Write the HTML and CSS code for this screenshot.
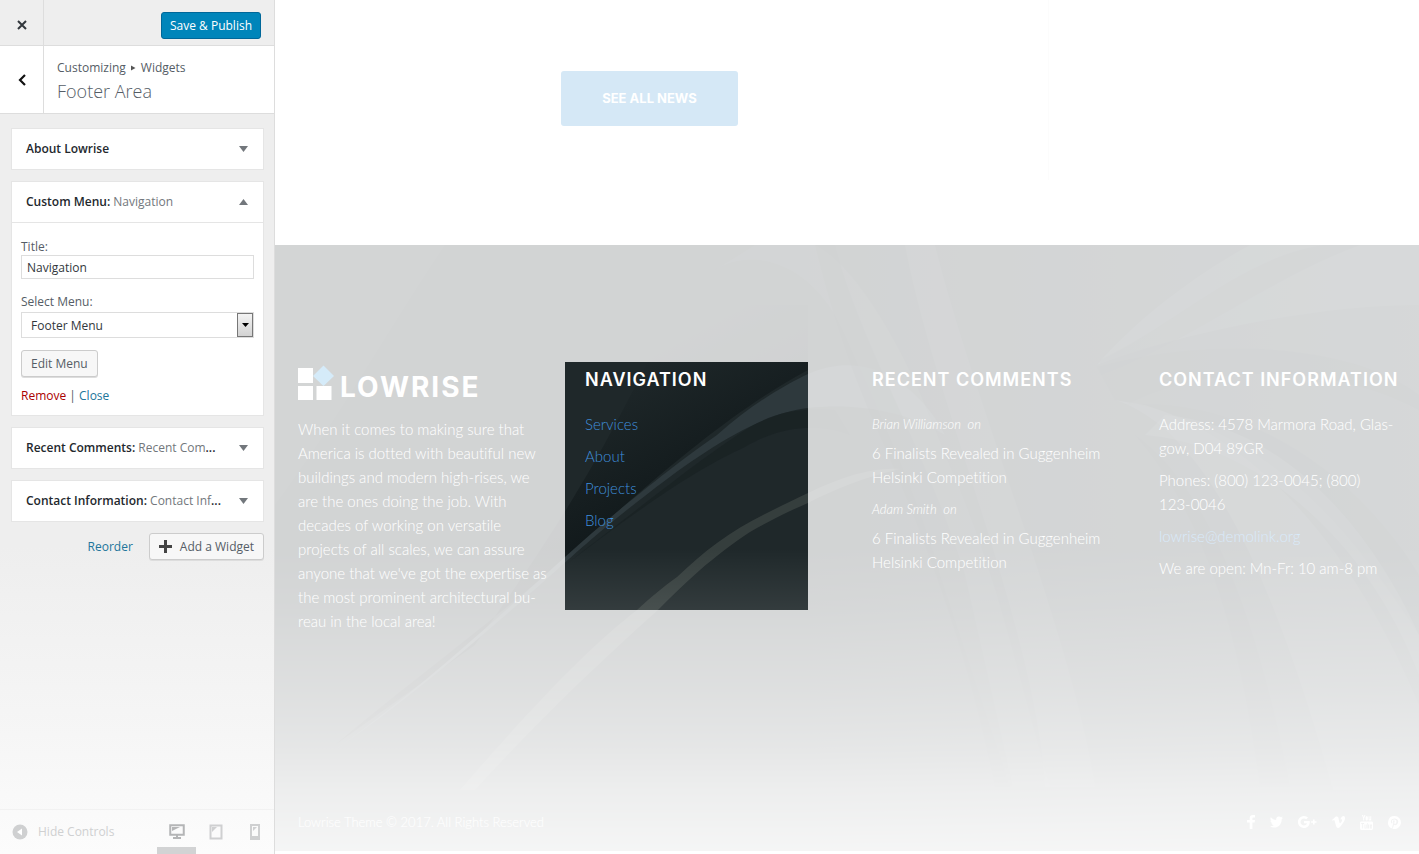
FILE: index.html
```html
<!DOCTYPE html>
<html lang="en">
<head>
<meta charset="utf-8">
<title>Customize: Footer Area</title>
<link rel="stylesheet" href="styles.css">
</head>
<body>
<aside class="sidebar">
  <div class="topbar">
    <button class="icon-cell" aria-label="Close"><svg width="12" height="12" viewBox="0 0 12 12"><path d="M2 2l8 8M10 2l-8 8" stroke="#32373c" stroke-width="2"/></svg></button>
    <button class="publish">Save &amp; Publish</button>
  </div>
  <header class="section-head">
    <button class="icon-cell back" aria-label="Back"><svg width="12" height="14" viewBox="0 0 12 14"><path d="M9 2L4 7l5 5" fill="none" stroke="#111" stroke-width="2.2"/></svg></button>
    <div class="section-title">
      <div class="crumbs"><span>Customizing</span><svg width="5" height="6" viewBox="0 0 5 6"><path d="M0 0.5L4.5 3 0 5.5z" fill="#555"/></svg><span>Widgets</span></div>
      <h1>Footer Area</h1>
    </div>
  </header>
  <div class="widgets">
    <section class="card">
      <button class="card-head"><span class="card-name">About Lowrise</span><svg class="caret" width="9" height="6" viewBox="0 0 9 6"><path d="M0 0h9L4.500 6z"/></svg></button>
    </section>
    <section class="card">
      <button class="card-head"><span class="card-name">Custom Menu: <span>Navigation</span></span><svg class="caret" width="9" height="6" viewBox="0 0 9 6"><path d="M0 6h9L4.500 0z"/></svg></button>
      <form class="card-body">
        <label for="title">Title:</label>
        <input id="title" type="text" value="Navigation">
        <label for="menu">Select Menu:</label>
        <div class="select">
          <select id="menu"><option>Footer Menu</option></select>
          <span class="select-arrow"><svg width="7" height="4" viewBox="0 0 7 4"><path d="M0 0h7L3.500 4z"/></svg></span>
        </div>
        <button type="button" class="plain">Edit Menu</button>
        <p class="actions"><a class="remove" href="#">Remove</a> | <a href="#">Close</a></p>
      </form>
    </section>
    <section class="card">
      <button class="card-head"><span class="card-name">Recent Comments: <span>Recent Com</span>...</span><svg class="caret" width="9" height="6" viewBox="0 0 9 6"><path d="M0 0h9L4.500 6z"/></svg></button>
    </section>
    <section class="card">
      <button class="card-head"><span class="card-name">Contact Information: <span>Contact Inf</span>...</span><svg class="caret" width="9" height="6" viewBox="0 0 9 6"><path d="M0 0h9L4.500 6z"/></svg></button>
    </section>
    <div class="add-row">
      <a href="#">Reorder</a>
      <button class="plain add"><svg width="13" height="13" viewBox="0 0 13 13"><path d="M6.500 0v13M0 6.500h13" stroke="#444" stroke-width="3"/></svg>Add a Widget</button>
    </div>
  </div>
  <footer class="controls">
    <button class="hide"><svg width="16" height="16" viewBox="0 0 16 16"><circle cx="8" cy="8" r="7.500" fill="#cfd0d1"/><path d="M10 4.500v7L5 8z" fill="#fff"/></svg>Hide Controls</button>
    <div class="devices">
      <button class="device active" aria-label="Desktop"><svg width="16" height="16" viewBox="0 0 16 16"><path d="M1.250 1.250h13.500v9.500H1.250z" fill="none" stroke="#b4b5b6" stroke-width="2"/><path d="M3 7V3h8zM7 11h2v2h3v2H4v-2h3z" fill="#b4b5b6"/></svg></button>
      <button class="device" aria-label="Tablet"><svg width="14" height="16" viewBox="0 0 14 16"><path d="M1.500 1.500h11v13h-11z" fill="none" stroke="#cfd0d1" stroke-width="2"/><path d="M3 8V3h5z" fill="#cfd0d1"/></svg></button>
      <button class="device" aria-label="Phone"><svg width="10" height="16" viewBox="0 0 10 16"><path d="M0 0h10v16H0zM2 2v10h6V2z" fill="#cfd0d1" fill-rule="evenodd"/><path d="M3 7V3h4z" fill="#cfd0d1"/></svg></button>
    </div>
  </footer>
</aside>

<main class="preview">
  <section class="news">
    <div class="news-main"><a class="see-all" href="#">SEE ALL NEWS</a></div>
  </section>
  <footer class="site-footer">
    <svg class="art" viewBox="0 0 1144 606" preserveAspectRatio="none" aria-hidden="true">
      <defs>
        <linearGradient id="shade" x1="0.35" y1="0.3" x2="0.560" y2="0.660"><stop offset="0" stop-color="#0b1214" stop-opacity="0"/><stop offset="1" stop-color="#0b1214" stop-opacity=".9"/></linearGradient>
        <linearGradient id="right" x1="0" y1="0" x2="1" y2="0"><stop offset="0" stop-color="#3a4448" stop-opacity="0"/><stop offset="1" stop-color="#3a4448" stop-opacity=".7"/></linearGradient>
        <linearGradient id="fade" x1="0" y1="0" x2="0" y2="1"><stop offset=".5" stop-color="#fff" stop-opacity="0"/><stop offset=".6" stop-color="#fff" stop-opacity=".09"/><stop offset=".73" stop-color="#fff" stop-opacity=".26"/><stop offset=".83" stop-color="#fff" stop-opacity=".43"/><stop offset=".9" stop-color="#fff" stop-opacity=".6"/><stop offset="1" stop-color="#fff" stop-opacity=".77"/></linearGradient>
      </defs>
      <rect width="1144" height="606" fill="#1f282a"/>
      <rect x="530" width="614" height="606" fill="url(#right)"/>
      <path d="M0 0H170C110 90 60 180 0 260z" fill="#2c3334" opacity=".5"/>
      <path d="M200 400C270 300 320 230 400 60H533V125C460 165 400 215 290 313C220 375 130 440 60 500z" fill="url(#shade)"/>
      <path d="M60 505C150 440 220 375 290 312C345 262 410 212 442 190C475 160 510 140 533 129C600 100 650 150 670 190C630 165 580 158 533 163C485 168 425 208 375 247C330 281 300 309 285 322C220 380 140 450 60 505z" fill="#2e393d"/>
      <path d="M290 320C375 255 430 210 475 182C500 168 520 163 560 165L575 190C540 176 500 184 470 202C420 225 375 256 290 320z" fill="#172022" opacity=".6"/>
      <path d="M185 545C250 470 310 405 362 365C376 352 388 342 402 332C415 320 428 308 442 298C458 286 475 276 492 268C506 261 520 254 533 248C570 230 600 222 625 224C590 232 560 244 533 258C514 266 494 276 475 287C458 298 440 312 425 325C410 338 396 352 383 365C310 430 250 490 200 545z" fill="#394241" opacity=".85"/>
      <path d="M440 25C480 0 540 20 570 90C600 160 640 240 665 330L735 542H775C740 420 720 320 670 210C630 100 580 20 540 0H480z" fill="#414a4b" opacity=".25"/>
      <path d="M540 0H560C585 100 650 200 690 330L738 542H720C690 390 640 270 600 180C570 110 555 60 540 0z" fill="#11191b" opacity=".3"/>
      <path d="M630 0H660C700 160 800 400 820 542H770C760 380 660 160 630 0z" fill="#4a5558" opacity=".25"/>
      <path d="M975 0H1144V60C1040 60 900 90 822 120C860 75 920 30 975 0z" fill="#485255" opacity=".35"/>
      <path d="M825 115C900 80 970 10 1050 0H1085C1000 30 910 100 825 130z" fill="#232c30" opacity=".4"/>
      <path d="M822 122C940 90 1080 100 1144 150V165C1060 120 940 115 850 160C980 150 1090 240 1144 330V390C1060 260 980 180 840 155z" fill="#1b2427" opacity=".35"/>
      <path d="M870 190C980 200 1090 290 1144 430V390C1090 270 1000 180 890 170z" fill="#566062" opacity=".3"/>
      <path d="M840 155C920 180 990 300 1058 545H1144V460C1090 330 1000 200 870 160z" fill="#4d5658" opacity=".35"/>
      <path d="M860 190C930 240 980 360 1015 542H985C965 390 930 270 860 190z" fill="#192224" opacity=".3"/>
      <rect width="1144" height="606" fill="url(#fade)"/>
    </svg>
    <div class="columns">
      <section class="col about">
        <div class="logo">
          <svg width="36" height="36" viewBox="0 0 36 36"><path d="M0 3h15v15H0zM0 21h15v14H0zM18.500 21h15v14h-15z" fill="#fff"/><path d="M25.500 0.500l10.500 10.500-10.500 10L15 11z" fill="#2f9de0"/></svg>
          <span>LOWRISE</span>
        </div>
        <p>When it comes to making sure that<br>America is dotted with beautiful new<br>buildings and modern high-rises, we<br>are the ones doing the job. With<br>decades of working on versatile<br>projects of all scales, we can assure<br>anyone that we've got the expertise as<br>the most prominent architectural bu-<br>reau in the local area!</p>
      </section>
      <nav class="col highlighted">
        <h2>NAVIGATION</h2>
        <ul>
          <li><a href="#">Services</a></li>
          <li><a href="#">About</a></li>
          <li><a href="#">Projects</a></li>
          <li><a href="#">Blog</a></li>
        </ul>
      </nav>
      <section class="col">
        <h2>RECENT COMMENTS</h2>
        <div class="comment"><em>Brian Williamson &nbsp;on</em><p>6 Finalists Revealed in Guggenheim Helsinki Competition</p></div>
        <div class="comment"><em>Adam Smith &nbsp;on</em><p>6 Finalists Revealed in Guggenheim Helsinki Competition</p></div>
      </section>
      <section class="col contact">
        <h2>CONTACT INFORMATION</h2>
        <p>Address: 4578 Marmora Road, Glas-<br>gow, D04 89GR</p>
        <p>Phones: (800) 123-0045; (800) <br>123-0046</p>
        <p><a href="#">lowrise@demolink.org</a></p>
        <p>We are open: Mn-Fr: 10 am-8 pm</p>
      </section>
    </div>
    <div class="legal">
      <span>Lowrise Theme © 2017. All Rights Reserved</span>
      <div class="social">
        <a href="#" aria-label="Facebook"><svg width="8" height="14" viewBox="0 0 8 14"><path d="M8 0v2.500H6.500C5.700 2.500 5.400 3 5.400 3.700V5H8l-.4 2.500H5.400V14H2.700V7.500H0V5h2.700V3.200C2.700 1.200 4 0 5.900 0z"/></svg></a>
        <a href="#" aria-label="Twitter"><svg width="13" height="12" viewBox="0 0 13 12"><path d="M13 1.700l-1.300 1.500C11.800 8 8.500 11.500 4 11.500c-1.500 0-2.900-.4-4-1.200 1.400.1 2.700-.2 3.800-1.100-1.100 0-2.100-.8-2.400-1.900h1.100C1.300 7 .4 5.900.4 4.600l1.200.3C.4 4 .1 2.500.8 1.200 2.100 2.800 4 3.800 6.200 3.900 5.800 2 7.200.4 8.900.4c.8 0 1.500.3 2 .9l1.700-.7-1.100 1.500z"/></svg></a>
        <a href="#" aria-label="Google Plus"><svg width="19" height="12" viewBox="0 0 19 12"><path d="M6 5h5.700C12.200 9 9.700 12 6 12a6 6 0 1 1 4-10.400L8.300 3.300A3.500 3.500 0 0 0 2.500 6c0 3.800 5.500 4.700 6.500 1.200H6zM15 3.500h1.600v1.700h1.900v1.600h-1.900v1.700H15V6.800h-1.900V5.200H15z"/></svg></a>
        <a href="#" aria-label="Vimeo"><svg width="13" height="12" viewBox="0 0 13 12"><path d="M13 2.800c-.1 1.300-1 3-2.600 5.100C8.700 10.200 7.300 12 6 12c-.8 0-1.500-.7-2-2.200L2.900 5.700C2.600 4.600 2.300 4 2 4l-1.300.8L0 3.900l2.300-2C3.300 1 4.100.5 4.500.5c1.200-.1 1.900.7 2.200 2.400.4 2.300.8 4.300 1.300 4.300.4 0 1-.6 1.700-1.800.8-1.300.5-2-.1-2.100l-1.200.2C9 1.200 10.300 0 11.500 0 12.600 0 13.100 1 13 2.800z"/></svg></a>
        <a href="#" aria-label="YouTube"><svg width="13" height="15" viewBox="0 0 13 15"><path d="M2 0h1l.7 2.200L4.400 0h1L4.200 3.300V5.500h-1V3.300zM5.600 2.200C5.600.9 7.800.9 7.800 2.200v2c0 1.700-2.200 1.700-2.200 0zM8.600 1.300h.9v3.200l.8-.5V1.300h.9v4.200h-.9V5c-.8.9-1.700.6-1.700-.3z"/><path fill-rule="evenodd" d="M1.500 6.500h10C12.500 6.500 13 7 13 8v5c0 1.300-.5 2-1.500 2h-10C.5 15 0 14.300 0 13V8c0-1 .5-1.500 1.500-1.500zM1.200 8v1h1v4.500h.9V9h1V8zM4.500 9.500v4h2.200v-4h-.8v3.300h-.6V9.500zM7.300 8v5.500h2V9.500H8V8zM10 9.500v4h2v-1.200h-1.200v-.6H12V9.500z"/></svg></a>
        <a href="#" aria-label="Pinterest"><svg width="13" height="13" viewBox="0 0 13 13"><path fill-rule="evenodd" d="M6.500 0a6.500 6.500 0 1 1-2 12.700c.5-.8.900-1.700 1.100-2.600l.4-1.300c2 1.200 4.200-.7 4.200-3.300C10.200 1.700 4 1.500 3 4.700c-.3 1.200 0 2.500 1 3l.4-1C2.900 4.200 5.500 2.700 7.400 3.700 9.500 5 7.900 8.700 6.500 7.800 5.600 7.200 6.800 6 6.700 5 6.500 3.800 5 4.300 5 5.700l.3 1.100-1 4c-.1.600-.1 1.200 0 1.800A6.500 6.500 0 0 1 6.500 0z"/></svg></a>
      </div>
    </div>
  </footer>
</main>
</body>
</html>
```
FILE: styles.css
```css
* { box-sizing: border-box; }
body {
  margin: 0;
  display: flex;
  min-height: 100vh;
  background: #fff;
  font: 12px/18px "Open Sans", "Noto Sans", sans-serif;
  color: #555d66;
}
h1, h2, p, ul { margin: 0; padding: 0; font-weight: inherit; }
ul { list-style: none; }
a { text-decoration: none; color: #21759b; }
button { font: inherit; color: inherit; background: none; border: 0; padding: 0; cursor: pointer; }
svg { display: block; flex: none; }

/* Sidebar */
.sidebar {
  flex: 0 0 275px;
  display: flex;
  flex-direction: column;
  border-right: 1px solid #ddd;
  background: linear-gradient(#eee 0, #eee 64%, #f6f6f6 86%, #fcfcfc 100%);
}
.topbar {
  display: flex;
  justify-content: space-between;
  align-items: center;
  height: 46px;
  padding-right: 13px;
  border-bottom: 1px solid #ddd;
}
.icon-cell {
  width: 44px;
  align-self: stretch;
  display: flex;
  align-items: center;
  justify-content: center;
  padding-top: 4px;
  border-right: 1px solid #ddd;
}
.back { padding-top: 0; }
.publish {
  width: 100px;
  height: 27px;
  margin-top: 6px;
  border: 1px solid #006799;
  border-radius: 3px;
  background: #0085ba;
  color: #fff;
}
.section-head {
  display: flex;
  height: 68px;
  background: #fff;
  border-bottom: 1px solid #ddd;
}
.section-title { padding: 13px 0 0 13px; }
.crumbs { display: flex; align-items: center; gap: 5px; }
.section-title h1 { font-size: 18px; line-height: 28px; font-weight: 300; }
.widgets { padding: 14px 10px 0 11px; display: grid; gap: 11px; }
.card { background: #fff; border: 1px solid #e5e5e5; min-width: 0; }
.card-head {
  display: flex;
  align-items: center;
  justify-content: space-between;
  width: 100%;
  height: 40px;
  padding: 0 15px 0 14px;
  text-align: left;
}
.card-name { font-weight: 600; color: #23282d; white-space: nowrap; }
.card-name span { font-weight: 400; color: #72777c; }
.caret { fill: #72777c; }
.card-body {
  display: flex;
  flex-direction: column;
  align-items: flex-start;
  border-top: 1px solid #e5e5e5;
  padding: 16px 9px 10px;
}
.card-body label { line-height: 16px; }
.card-body input, .select {
  width: 100%;
  border: 1px solid #ddd;
  background: #fff;
  color: #32373c;
}
.card-body input { height: 24px; padding: 0 5px; margin-bottom: 15px; font: inherit; }
.select { display: flex; height: 26px; margin: 2px 0 12px; }
.select select {
  flex: 1;
  appearance: none;
  border: 0;
  padding: 2px 9px 0;
  background: none;
  font: inherit;
  color: inherit;
}
.select-arrow {
  width: 16px;
  display: flex;
  align-items: center;
  justify-content: center;
  border: 1px solid #777;
  background: linear-gradient(#f3f3f3, #d2d2d2);
}
.plain {
  height: 27px;
  padding: 0 9px;
  border: 1px solid #ccc;
  border-radius: 3px;
  background: #f7f7f7;
  box-shadow: 0 1px 0 #ddd;
}
.actions { margin-top: 10px; }
.actions .remove { color: #a00; }
.add-row { display: flex; justify-content: flex-end; align-items: center; gap: 16px; }
.add { display: flex; align-items: center; gap: 8px; }
.controls {
  margin-top: auto;
  height: 45px;
  display: flex;
  justify-content: space-between;
  border-top: 1px solid #f2f2f2;
  padding: 0 0 0 12px;
  color: #cfd0d1;
}
.hide { display: flex; align-items: center; gap: 10px; }
.devices { display: flex; }
.device { width: 39px; display: flex; align-items: center; justify-content: center; border-bottom: 7px solid transparent; padding-top: 6px; }
.device.active { border-bottom-color: #d2d3d4; }

/* Site preview */
.preview { flex: 1; min-width: 0; display: flex; flex-direction: column; padding-bottom: 3px; }
.news { display: grid; grid-template-columns: 774fr 370fr; height: 245px; }
.news-main {
  display: flex;
  justify-content: center;
  align-items: flex-start;
  padding: 71px 48px 0 24px;
  height: 180px;
  border-right: 1px solid #fcfcfc;
}
.see-all {
  padding: 16px 41px;
  border-radius: 3px;
  background: #d5e8f6;
  color: #fff;
  font: 700 13px/23px Inter, sans-serif;
}
.site-footer {
  position: relative;
  isolation: isolate;
  overflow: hidden;
  flex: 1;
  display: flex;
  flex-direction: column;
  justify-content: space-between;
  padding: 117px 22px 17px 23px;
  color: #fff;
  font: 300 15px/24px Lato, sans-serif;
  font-variant-ligatures: none;
}
.art { position: absolute; inset: 0; width: 100%; height: 100%; z-index: -1; }
.columns { display: grid; grid-template-columns: repeat(4, minmax(0, 1fr)); column-gap: 49px; align-items: start; }
.col { padding-top: 6px; }
.col h2 { font: 600 18px/24px Inter, sans-serif; letter-spacing: 1px; white-space: nowrap; margin-bottom: 20px; }
.about { padding-top: 3px; white-space: nowrap; }
.logo { display: flex; align-items: flex-end; gap: 6px; margin-bottom: 16px; }
.logo span { font: 700 28px/28px Inter, sans-serif; letter-spacing: 2px; }
/* The selected widget stays clear while its shadow veils the rest of the footer */
.highlighted {
  position: relative;
  z-index: 1;
  margin: 0 15px 0 -20px;
  padding-left: 20px;
  min-height: 248px;
  box-shadow: 0 0 0 2000px rgba(255, 255, 255, .8);
}
.highlighted h2 { color: #fff; }
.highlighted li { margin-bottom: 8px; }
.highlighted a { color: #3f8fdc; }
.comment { margin-bottom: 8px; }
.comment em { display: block; font-size: 13px; margin-bottom: 5px; }
.contact p { margin-bottom: 8px; }
.contact a { color: #3f9be8; }
.legal { display: flex; justify-content: space-between; align-items: center; font-size: 13px; }
.social { display: flex; align-items: center; gap: 15px; fill: #fff; margin-right: -4px; }
```
